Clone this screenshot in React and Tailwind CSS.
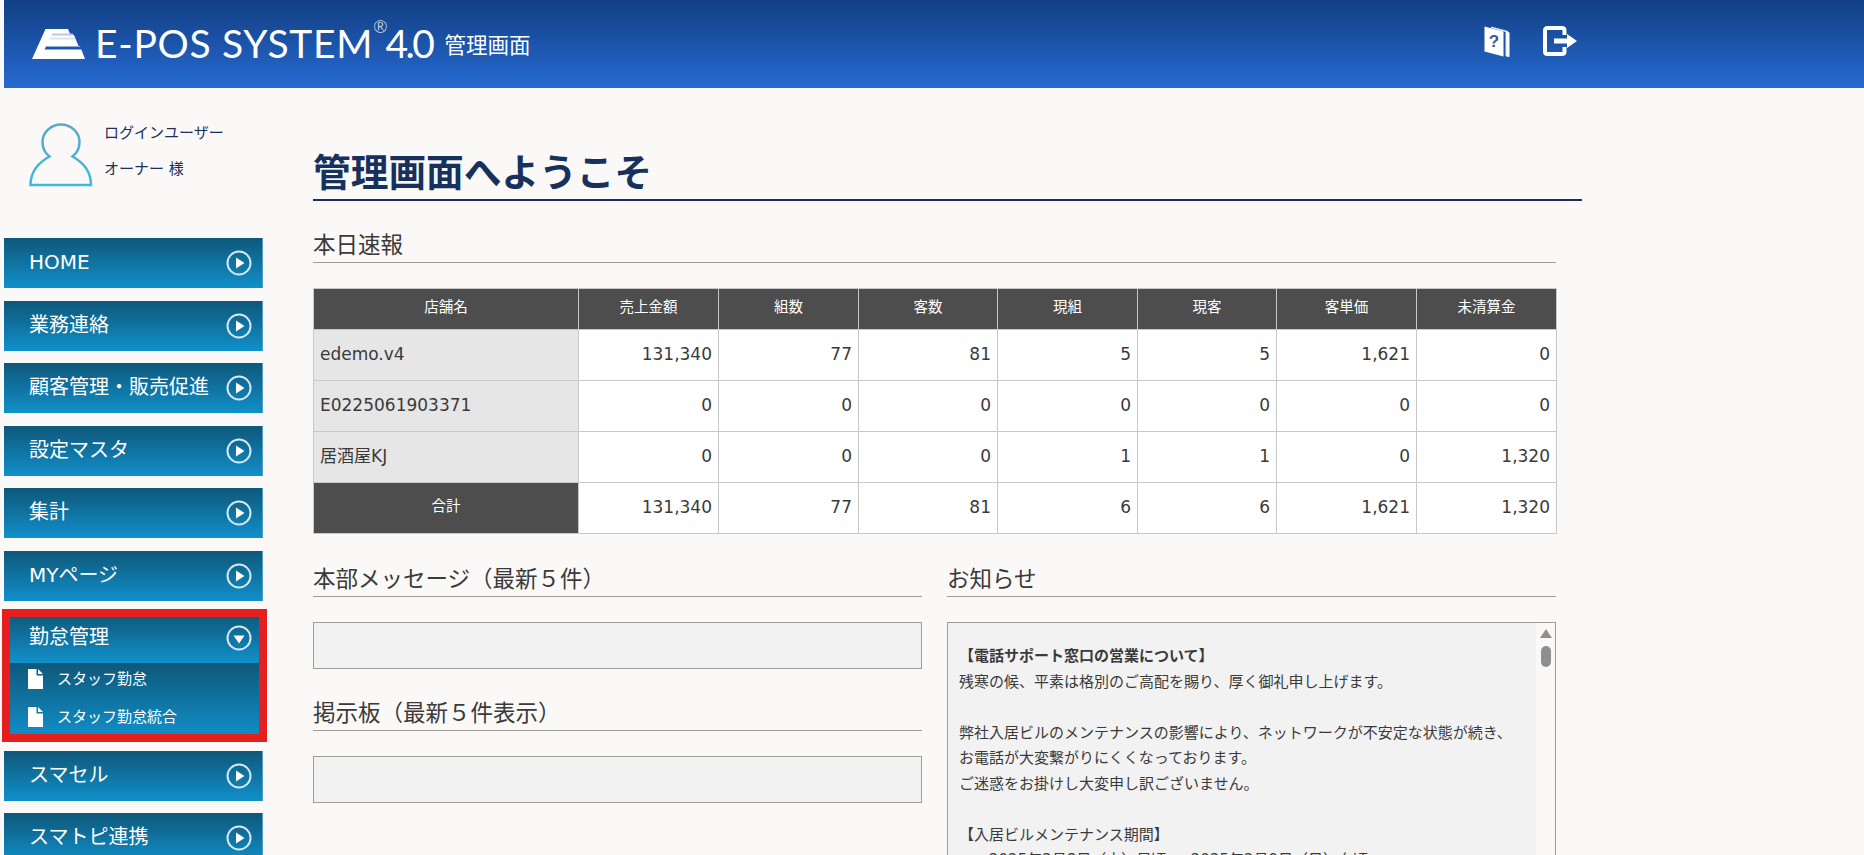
import React from "react";

const menuTop = ["HOME", "業務連絡", "顧客管理・販売促進", "設定マスタ", "集計", "MYページ"];
const menuBottom = ["スマセル", "スマトピ連携"];

const rows = [
  ["edemo.v4", "131,340", "77", "81", "5", "5", "1,621", "0"],
  ["E0225061903371", "0", "0", "0", "0", "0", "0", "0"],
  ["居酒屋KJ", "0", "0", "0", "1", "1", "0", "1,320"],
];
const total = ["131,340", "77", "81", "6", "6", "1,621", "1,320"];
const heads = ["売上金額", "組数", "客数", "現組", "現客", "客単価", "未清算金"];

function CircleIcon({ down }) {
  return (
    <svg width="26" height="26" viewBox="0 0 26 26" className="shrink-0">
      <circle cx="13" cy="13" r="11.5" fill="none" stroke="#d6e8f2" strokeWidth="2" />
      {down ? <path d="M7.5 10.5H18.5L13 18.5Z" fill="#fff" /> : <path d="M10 7.5V18.5L18.5 13Z" fill="#fff" />}
    </svg>
  );
}

function MenuButton({ label, down }) {
  return (
    <div className="flex h-[50px] items-center justify-between border-r border-[#4f9cc4] bg-gradient-to-b from-[#0e587a] to-[#1090cb] pl-[25px] pr-[10px] text-[20px] text-white">
      <span className="pb-[2px]">{label}</span>
      <CircleIcon down={down} />
    </div>
  );
}

function DocIcon() {
  return (
    <svg width="15" height="20" viewBox="0 0 15 20" className="shrink-0">
      <path d="M0 0H8.5V6.5H15V20H0Z" fill="#fff" />
      <path d="M10 0L15 5H10Z" fill="#fff" />
    </svg>
  );
}

function SubItem({ label }) {
  return (
    <div className="flex h-[32px] items-center pl-[24px] text-[15px] text-white">
      <DocIcon />
      <span className="ml-[14px]">{label}</span>
    </div>
  );
}

function Heading({ children }) {
  return (
    <h2 className="h-[39px] border-b border-[#a09d92] text-[22.5px] leading-[43px] text-[#3a3a3a]">{children}</h2>
  );
}

function UserIcon() {
  return (
    <svg width="64" height="64" viewBox="0 0 64 64" className="shrink-0">
      <defs>
        <linearGradient id="userGrad" x1="0" y1="0" x2="0" y2="1">
          <stop offset="0" stopColor="#5ea6c6" />
          <stop offset="1" stopColor="#3fb8de" />
        </linearGradient>
      </defs>
      <path
        d="M1.5 62H62C62 47.5 53.5 39 43.5 33.5C48.5 29.5 50.5 24 50.5 19C50.5 9.5 42 1.5 32 1.5C22 1.5 13.5 9.5 13.5 19C13.5 24 15.5 29.5 20.5 33.5C10.5 39 1.5 47.5 1.5 62Z"
        fill="none"
        stroke="url(#userGrad)"
        strokeWidth="2.5"
      />
    </svg>
  );
}

function LogoMark() {
  return (
    <svg width="53" height="30" viewBox="0 0 53 30" className="shrink-0">
      <path d="M13.5 0H36L38.5 6H42L46.5 17H48L53 30H0Z" fill="#fff" />
      <rect x="20" y="4.5" width="21" height="2" fill="#b7c8e6" />
      <path d="M18 8.5H42.5L43.5 10.5H17Z" fill="#dbe4f3" />
      <path d="M14 17.5H50L51 20.5H12.5Z" fill="#1f58ae" />
    </svg>
  );
}

function BookIcon() {
  return (
    <svg width="26" height="31" viewBox="0 0 26 31" className="shrink-0">
      <path d="M7 0.5L24 5V30.5L21.5 30V6L7 2Z" fill="#dfe8f7" />
      <path d="M22.5 5.5L25.5 6.5V31L22.5 30.5Z" fill="#fff" />
      <path d="M0.5 0.5L19.5 5.5V30.5L0.5 25.5Z" fill="#fff" />
      <text x="10" y="21" fontSize="17" fontWeight="700" fill="#2a5db0" textAnchor="middle" fontFamily="'Liberation Sans', sans-serif">?</text>
    </svg>
  );
}

function LogoutIcon() {
  return (
    <svg width="34" height="30" viewBox="0 0 34 30" className="shrink-0">
      <path d="M21.5 9V4.5C21.5 3 20.5 2 19 2H4.5C3 2 2 3 2 4.5V25.5C2 27 3 28 4.5 28H19C20.5 28 21.5 27 21.5 25.5V21" fill="none" stroke="#fff" strokeWidth="4" />
      <path d="M11 12.5H24V8L34 15L24 22V17.5H11Z" fill="#fff" />
    </svg>
  );
}

export default function App() {
  return (
    <div className="relative h-[855px] w-[1864px] overflow-hidden bg-[#faf9f7] pl-1 font-['DejaVu_Sans','Noto_Sans_CJK_JP',sans-serif]">
      <header className="flex h-[88px] items-center bg-gradient-to-b from-[#123f84] to-[#266bd2] pl-[28px] text-white">
        <LogoMark />
        <div className="ml-[10px] flex items-start pb-[3px]">
          <span className="font-['Lato',sans-serif] text-[39px] font-normal leading-[44px] tracking-[0.7px]">E-POS SYSTEM</span>
          <span className="mt-[-4px] font-['Lato',sans-serif] text-[17px] font-light leading-[20px]">®</span>
          <span className="ml-[-2px] font-['Lato',sans-serif] text-[39px] font-normal leading-[44px] tracking-[-2.5px]">4.0</span>
        </div>
        <span className="ml-[12px] font-['Noto_Sans_CJK_JP',sans-serif] text-[21.5px]">管理画面</span>
        <div className="ml-auto mr-[287px] flex items-center gap-[33px] pb-[6px]">
          <BookIcon />
          <LogoutIcon />
        </div>
      </header>

      <div className="flex">
        <aside className="w-[259px] shrink-0">
          <div className="flex h-[150px] pl-[25px] pt-[35px]">
            <UserIcon />
            <div className="ml-[11px] mt-[-8px] text-[15px] leading-[36px] text-[#1c2f5a]">
              <div>ログインユーザー</div>
              <div>オーナー 様</div>
            </div>
          </div>
          <nav className="flex flex-col gap-[12.5px]">
            {menuTop.map((m) => (
              <MenuButton key={m} label={m} />
            ))}
            <div>
              <MenuButton label="勤怠管理" down />
              <div className="flex h-[75px] flex-col gap-[6px] bg-gradient-to-b from-[#0e587a] to-[#1090cb]">
                <SubItem label="スタッフ勤怠" />
                <SubItem label="スタッフ勤怠統合" />
              </div>
            </div>
            {menuBottom.map((m) => (
              <MenuButton key={m} label={m} />
            ))}
          </nav>
        </aside>

        <main className="ml-[50px] w-[1269px] shrink-0">
          <h1 className="mt-[62px] h-[51px] border-b-2 border-[#17305c] text-[37.7px] font-bold leading-[46px] text-[#17305c]">
            管理画面へようこそ
          </h1>
          <div className="mt-[23px] w-[1243px]">
            <Heading>本日速報</Heading>
            <table className="mt-[25px] w-[1243px] table-fixed border-collapse text-[17px] text-[#3a3a3a]">
              <colgroup>
                <col className="w-[265px]" />
                <col className="w-[140px]" />
                <col className="w-[140px]" />
                <col className="w-[139px]" />
                <col className="w-[140px]" />
                <col className="w-[139px]" />
                <col className="w-[140px]" />
                <col className="w-[140px]" />
              </colgroup>
              <thead>
                <tr className="h-[41px] bg-[#4d4d4d] text-[14.5px] text-white">
                  <th className="border border-[#c8c8c8] pb-[2px] font-normal">店舗名</th>
                  {heads.map((h) => (
                    <th key={h} className="border border-[#c8c8c8] pb-[2px] font-normal">{h}</th>
                  ))}
                </tr>
              </thead>
              <tbody>
                {rows.map((r) => (
                  <tr key={r[0]} className="h-[51px]">
                    <td className="border border-[#c8c8c8] bg-[#e6e6e6] pl-[6px]">{r[0]}</td>
                    {r.slice(1).map((c, i) => (
                      <td key={i} className="border border-[#c8c8c8] bg-white pr-[6px] text-right">{c}</td>
                    ))}
                  </tr>
                ))}
                <tr className="h-[51px]">
                  <td className="border border-[#c8c8c8] bg-[#4d4d4d] pb-[2px] text-center text-[14.5px] text-white">合計</td>
                  {total.map((c, i) => (
                    <td key={i} className="border border-[#c8c8c8] bg-white pr-[6px] text-right">{c}</td>
                  ))}
                </tr>
              </tbody>
            </table>
            <div className="mt-[24px] grid grid-cols-2 gap-[25px]">
              <div>
                <Heading>本部メッセージ（最新５件）</Heading>
                <div className="mt-[25px] h-[47px] border border-[#a09d92] bg-[#f2f2f2]" />
                <div className="mt-[23px]">
                  <Heading>掲示板（最新５件表示）</Heading>
                </div>
                <div className="mt-[25px] h-[47px] border border-[#a09d92] bg-[#f2f2f2]" />
              </div>
              <div>
                <Heading>お知らせ</Heading>
                <div className="mt-[25px] flex h-[400px] border border-[#a09d92] bg-[#f2f2f2]">
                  <div className="flex-1 pl-[11px] pt-[21px] text-[15px] leading-[25.5px] text-[#3a3a3a]">
                    <div className="font-bold">【電話サポート窓口の営業について】</div>
                    <div>残寒の候、平素は格別のご高配を賜り、厚く御礼申し上げます。</div>
                    <div className="h-[25.5px]" />
                    <div>弊社入居ビルのメンテナンスの影響により、ネットワークが不安定な状態が続き、</div>
                    <div>お電話が大変繋がりにくくなっております。</div>
                    <div>ご迷惑をお掛けし大変申し訳ございません。</div>
                    <div className="h-[25.5px]" />
                    <div>【入居ビルメンテナンス期間】</div>
                    <div className="pl-[30px]">2025年2月8日（土）昼頃 ～ 2025年2月9日（日）夕頃</div>
                  </div>
                  <div className="flex w-[19px] shrink-0 flex-col items-center bg-[#faf9f7] pt-[6px]">
                    <svg width="12" height="9" viewBox="0 0 12 9"><path d="M6 0L12 9H0Z" fill="#8f8f8f" /></svg>
                    <div className="mt-[8px] h-[21px] w-[10px] rounded-full bg-[#8f8f8f]" />
                  </div>
                </div>
              </div>
            </div>
          </div>
        </main>
      </div>

      <div className="absolute left-[1.5px] top-[609px] h-[133px] w-[265px] border-[8.5px] border-[#e61e1e]" />
    </div>
  );
}
